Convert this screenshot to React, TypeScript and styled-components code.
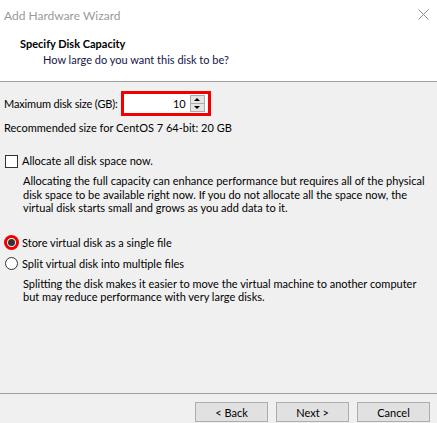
import React from "react";
import styled, { createGlobalStyle } from "styled-components";

const GlobalStyle = createGlobalStyle`
  html, body { margin: 0; padding: 0; background: #f0f0f0; }
  body { font-family: "Lato", "Liberation Sans", sans-serif; font-size: 11px; color: #000; }
  * { box-sizing: border-box; }
`;

const Window = styled.div`
  width: 437px;
  height: 423px;
  display: flex;
  flex-direction: column;
  background: #f0f0f0;
  overflow: hidden;
`;

const TitleBar = styled.div`
  height: 30px;
  flex: none;
  background: #fff;
  display: flex;
  align-items: center;
  justify-content: space-between;
  padding: 0 8px 0 4px;
`;

const TitleText = styled.span`
  font-size: 12px;
  color: #9a9a9a;
`;

const CloseIcon = styled.svg`
  width: 11px;
  height: 11px;
  margin-bottom: 1px;
`;

const Header = styled.div`
  height: 52px;
  flex: none;
  background: #fff;
  padding: 7px 0 0 20px;
  display: flex;
  flex-direction: column;
  gap: 2px;
  border-bottom: 1px solid #a0a0a0;
`;

const Heading = styled.div`
  font-weight: 700;
  line-height: 14px;
`;

const SubHeading = styled.div`
  line-height: 14px;
  padding-left: 23px;
  color: #14144a;
`;

const Body = styled.div`
  flex: 1;
  display: flex;
  flex-direction: column;
  padding: 0 4px;
`;

const SizeRow = styled.div`
  margin-top: 9px;
  height: 24px;
  display: flex;
  align-items: center;
  gap: 3px;
`;

const SizeLabel = styled.span`
  letter-spacing: -0.15px;
`;

const SpinBox = styled.div`
  width: 90px;
  height: 25px;
  border: 3px solid #f20000;
  background: #fff;
  display: flex;
  align-items: stretch;
`;

const SpinValue = styled.div`
  flex: 1;
  text-align: right;
  padding-right: 4px;
  line-height: 19px;
`;

const SpinButtons = styled.div`
  width: 15px;
  margin: 1px 3px 1px 0;
  display: flex;
  flex-direction: column;
`;

const SpinButton = styled.div`
  flex: 1;
  background: #e5e5e5;
  border: 1px solid #acacac;
  display: flex;
  align-items: center;
  justify-content: center;
  & + & { border-top: none; }
`;

const Arrow = styled.span<{ $up?: boolean }>`
  width: 0;
  height: 0;
  border-left: 3px solid transparent;
  border-right: 3px solid transparent;
  ${(p) => (p.$up ? "border-bottom: 3px solid #000;" : "border-top: 3px solid #000;")}
`;

const Line = styled.div<{ $mt?: number }>`
  line-height: 14px;
  margin-top: ${(p) => p.$mt ?? 0}px;
  white-space: nowrap;
`;

const OptionRow = styled.label<{ $mt: number }>`
  display: flex;
  align-items: center;
  height: 16px;
  margin-top: ${(p) => p.$mt}px;
  line-height: 14px;
`;

const CheckBox = styled.span`
  width: 13px;
  height: 13px;
  margin: 0 4px 0 1px;
  border: 1px solid #333;
  background: #fff;
  flex: none;
`;

const Radio = styled.span<{ $focus?: boolean }>`
  width: 13px;
  height: 13px;
  margin: 0 4px 0 1px;
  border-radius: 50%;
  border: 1px solid #333;
  background: #fff;
  flex: none;
  display: flex;
  align-items: center;
  justify-content: center;
  ${(p) => (p.$focus ? "border: 2px solid #f20000; box-shadow: 0 0 0 1px #f20000;" : "")}
`;

const RadioDot = styled.span`
  width: 7px;
  height: 7px;
  border-radius: 50%;
  background: #333;
`;

const Description = styled.div<{ $mt: number }>`
  margin-top: ${(p) => p.$mt}px;
  padding-left: 19px;
  line-height: 13.5px;
  white-space: nowrap;
`;

const Footer = styled.div`
  flex: none;
  border-top: 1px solid #a0a0a0;
  padding: 8px 7px 1px 0;
  display: flex;
  justify-content: flex-end;
  gap: 8px;
`;

const Button = styled.button`
  width: 73px;
  height: 20px;
  padding: 0;
  font-family: inherit;
  font-size: 11px;
  color: #000;
  background: #e1e1e1;
  border: 1px solid #adadad;
  border-radius: 0;
`;

export default function App() {
  return (
    <Window>
      <GlobalStyle />
      <TitleBar>
        <TitleText>Add Hardware Wizard</TitleText>
        <CloseIcon viewBox="0 0 11 11">
          <path d="M0.5 0.5 L10.5 10.5 M10.5 0.5 L0.5 10.5" stroke="#8a8a8a" strokeWidth="1" fill="none" />
        </CloseIcon>
      </TitleBar>
      <Header>
        <Heading>Specify Disk Capacity</Heading>
        <SubHeading>How large do you want this disk to be?</SubHeading>
      </Header>
      <Body>
        <SizeRow>
          <SizeLabel>Maximum disk size (GB):</SizeLabel>
          <SpinBox>
            <SpinValue>10</SpinValue>
            <SpinButtons>
              <SpinButton><Arrow $up /></SpinButton>
              <SpinButton><Arrow /></SpinButton>
            </SpinButtons>
          </SpinBox>
        </SizeRow>
        <Line $mt={6}>Recommended size for CentOS 7 64-bit: 20 GB</Line>
        <OptionRow $mt={18}>
          <CheckBox />
          <span>Allocate all disk space now.</span>
        </OptionRow>
        <Description $mt={5}>
          Allocating the full capacity can enhance performance but requires all of the physical
          <br />
          disk space to be available right now. If you do not allocate all the space now, the
          <br />
          virtual disk starts small and grows as you add data to it.
        </Description>
        <OptionRow $mt={20}>
          <Radio $focus><RadioDot /></Radio>
          <span>Store virtual disk as a single file</span>
        </OptionRow>
        <OptionRow $mt={5}>
          <Radio />
          <span>Split virtual disk into multiple files</span>
        </OptionRow>
        <Description $mt={5}>
          Splitting the disk makes it easier to move the virtual machine to another computer
          <br />
          but may reduce performance with very large disks.
        </Description>
      </Body>
      <Footer>
        <Button>&lt; Back</Button>
        <Button>Next &gt;</Button>
        <Button>Cancel</Button>
      </Footer>
    </Window>
  );
}
